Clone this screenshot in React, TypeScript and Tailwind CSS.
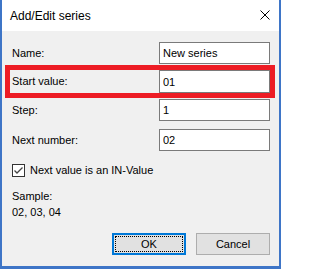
import React from "react";

function Field({ value }: { value: string }) {
  return (
    <input
      readOnly
      value={value}
      className="h-[22px] w-[111px] border border-[#7a7a7a] bg-white px-[3px] text-[11px] leading-none text-black outline-none"
    />
  );
}

function Row({ label, value }: { label: string; value: string }) {
  return (
    <div className="flex h-[22px] items-center justify-between pl-[10px] pr-[9px]">
      <span>{label}</span>
      <Field value={value} />
    </div>
  );
}

export default function App() {
  return (
    <div className="flex h-[269px] w-[281px] flex-col border-x-2 border-b-[3px] border-[#3e75c7] bg-[#f0f0f0] font-['Liberation_Sans',Arial,sans-serif] text-[11px] text-black">
      {/* title bar */}
      <div className="flex h-[31px] shrink-0 items-center justify-between bg-white pl-[8px] pr-[9px]">
        <span className="text-[12px]">Add/Edit series</span>
        <svg width="10" height="10" viewBox="0 0 10 10" className="mt-[-1px]">
          <path d="M0.5 0.5 L9.5 9.5 M9.5 0.5 L0.5 9.5" stroke="#000" strokeWidth="1" />
        </svg>
      </div>

      <div className="flex flex-1 flex-col pt-[11px]">
        <Row label="Name:" value="New series" />

        <div className="mt-[1px] ml-[3px] flex h-[33px] w-[270px] items-center justify-between border-[5px] border-[#ed1c24] pl-[2px]">
          <span>Start value:</span>
          <input
            readOnly
            value="01"
            className="h-[23px] w-[111px] border border-[#7a7a7a] bg-white px-[3px] text-[11px] leading-none text-black outline-none"
          />
        </div>

        <div className="mt-[1px]">
          <Row label="Step:" value="1" />
        </div>
        <div className="mt-[8px]">
          <Row label="Next number:" value="02" />
        </div>

        <div className="mt-[13px] flex h-[13px] items-center gap-[5px] pl-[10px]">
          <svg width="13" height="13" viewBox="0 0 13 13">
            <rect x="0.5" y="0.5" width="12" height="12" fill="#fff" stroke="#333" />
            <path d="M2.5 6.5 L5 9 L10.5 3.5" fill="none" stroke="#444" strokeWidth="1.3" />
          </svg>
          <span>Next value is an IN-Value</span>
        </div>

        <div className="mt-[11px] pl-[10px] leading-[16px]">
          <div>Sample:</div>
          <div>02, 03, 04</div>
        </div>

        <div className="mt-[13px] flex justify-end gap-[10px] pr-[9px]">
          <button className="flex h-[22px] w-[74px] items-center justify-center border-2 border-[#0078d7] bg-[#e1e1e1] p-[1px]">
            <span className="flex h-full w-full items-center justify-center border border-dotted border-black">
              OK
            </span>
          </button>
          <button className="flex h-[22px] w-[74px] items-center justify-center border border-[#adadad] bg-[#e1e1e1]">
            Cancel
          </button>
        </div>
      </div>
    </div>
  );
}
